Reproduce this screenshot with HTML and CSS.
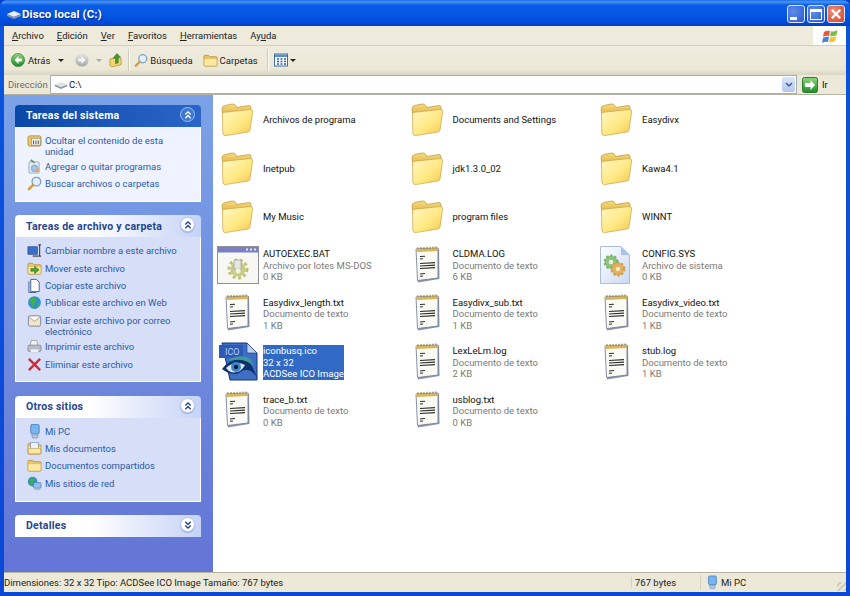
FILE: index.html
```html
<!DOCTYPE html>
<html lang="es">
<head>
<meta charset="utf-8">
<title>Disco local (C:)</title>
<link rel="stylesheet" href="styles.css">
</head>
<body>
<svg class="defs" aria-hidden="true">
  <defs>
    <linearGradient id="gFolder" x1="0" y1="0" x2="1" y2="1"><stop offset="0" stop-color="#fff8c4"/><stop offset=".55" stop-color="#ffe985"/><stop offset="1" stop-color="#f4c84e"/></linearGradient>
    <linearGradient id="gBack" x1="0" y1="0" x2="0" y2="1"><stop offset="0" stop-color="#f8dc7c"/><stop offset="1" stop-color="#dcae42"/></linearGradient>
    <linearGradient id="gGreen" x1="0" y1="0" x2="0" y2="1"><stop offset="0" stop-color="#8fd67a"/><stop offset="1" stop-color="#1f8a2a"/></linearGradient>
    <linearGradient id="gGray" x1="0" y1="0" x2="0" y2="1"><stop offset="0" stop-color="#e4e4e4"/><stop offset="1" stop-color="#a8a8a8"/></linearGradient>
    <linearGradient id="gPage" x1="0" y1="0" x2="1" y2="1"><stop offset="0" stop-color="#ffffff"/><stop offset="1" stop-color="#c9d9f3"/></linearGradient>
    <symbol id="folder" viewBox="0 0 34 34">
      <path d="M2 7Q2 4 5 3.500L12 2Q15 1.500 16 4L16.500 5.500L29 3.500Q31 3.300 31 6L31 12L3 14Z" fill="url(#gBack)" stroke="#b8953e" stroke-width=".7"/>
      <path d="M2.500 10.500L30 7.500Q33 7.300 32.600 10L30 28Q29.800 29.600 28 30L6 33.500Q3 34 2.800 31Z" fill="url(#gFolder)" stroke="#c8a24a" stroke-width=".7"/>
    </symbol>
    <symbol id="note" viewBox="0 0 26 38">
      <path d="M1.500 4L24 2.500L24.500 33L3 36.500Z" fill="#8d97ad"/>
      <path d="M1 3L23 2L23 32L2.500 34.500Z" fill="#fbfbf6" stroke="#6b7690" stroke-width=".8"/>
      <path d="M1.500 3L23 2L23 5L1.500 6Z" fill="#d9b458"/>
      <path d="M3 3V1.200M6 3V1M9 3V1M12 2.800V.8M15 2.800V.8M18 2.600V.6M21 2.500V.5" stroke="#7a6a3a" stroke-width="1"/>
      <path d="M5 10.500L10 10.200M5 13L8 12.800M5 17.500L20 16.600M5 20L20 19.100M5 22.500L20 21.600M5 28L10 27.500M5 30.300L8 30" stroke="#2e2e2e" stroke-width="1.100"/>
    </symbol>
    <symbol id="gears" viewBox="0 0 20 20">
      <circle cx="7" cy="7" r="5.500" fill="#8cc47a"/><circle cx="7" cy="7" r="5.500" fill="none" stroke="#7ab070" stroke-width="2" stroke-dasharray="2 1.500"/>
      <circle cx="7" cy="7" r="2" fill="#e8f3e0"/>
      <circle cx="13" cy="13" r="5.500" fill="#e0b060"/><circle cx="13" cy="13" r="5.500" fill="none" stroke="#cf9f4e" stroke-width="2" stroke-dasharray="2 1.500"/>
      <circle cx="13" cy="13" r="2" fill="#f5e6c4"/>
    </symbol>
    <symbol id="bat" viewBox="0 0 42 38">
      <rect x=".5" y=".5" width="41" height="37" fill="#f7f7f4" stroke="#8f8f98"/>
      <rect x="1" y="1" width="40" height="5.500" fill="#7b80c4"/>
      <path d="M29 3.500H31M33 3.500H35M37 3.500H39" stroke="#e5e6f5" stroke-width="2"/>
      <circle cx="21" cy="23" r="7.500" fill="#c9cc86"/><circle cx="21" cy="23" r="9" fill="none" stroke="#bfc274" stroke-width="3" stroke-dasharray="3 2.500"/>
      <rect x="17" y="14" width="7" height="9" rx="1" fill="#e4e6e2" stroke="#9a9c90" stroke-width=".6"/>
      <circle cx="21" cy="25" r="2.500" fill="#f5f5da"/>
    </symbol>
    <symbol id="sys" viewBox="0 0 32 40">
      <path d="M1.500 1.500H22L30.500 10V38.500H1.500Z" fill="url(#gPage)" stroke="#a9bddd"/>
      <path d="M22 1.500V10H30.500Z" fill="#a8c4ec"/>
      <use href="#gears" x="4" y="9" width="23" height="23"/>
    </symbol>
    <symbol id="ico" viewBox="0 0 40 40">
      <path d="M3 1H28L38 11V38H11Z" fill="#3f6fc4" stroke="#17346e"/>
      <path d="M28 1V11H38Z" fill="#bcd2f2" stroke="#17346e" stroke-width=".6"/>
      <rect x="0" y="3" width="24" height="13" fill="#2a5bb8"/>
      <text x="6" y="13" class="ico-tag">ICO</text>
      <path d="M3 27Q14 12 31 20L39 37Q30 22 20 31Q12 34 3 27Z" fill="#10306a"/>
      <path d="M7 26Q16 18 26 23Q22 31 14 30.500Q10 30 7 26Z" fill="#dbe8f7"/>
      <circle cx="17" cy="25" r="5" fill="#3d86c8"/><circle cx="17" cy="25" r="2.200" fill="#0a1d44"/>
      <path d="M10 17Q24 11 32 18L35 25Q26 15 12 19Z" fill="#3f9a9e"/>
    </symbol>
    <symbol id="mg" viewBox="0 0 16 16">
      <circle cx="10" cy="6" r="4.600" fill="#dff0fb" stroke="#7f9fbe" stroke-width="1.400"/>
      <path d="M6.600 9.400L2 14" stroke="#d6973f" stroke-width="2.600" stroke-linecap="round"/>
    </symbol>
    <symbol id="smallfolder" viewBox="0 0 16 16">
      <path d="M1 4Q1 2.500 2.500 2.500H6L7.500 4H14Q15 4 15 5V13Q15 14 14 14H2Q1 14 1 13Z" fill="#e9c568" stroke="#b08a35" stroke-width=".8"/>
      <path d="M1.500 6.500H14.500V13.500H1.500Z" fill="#fbe8a3"/>
    </symbol>
    <symbol id="pc" viewBox="0 0 16 16">
      <rect x="4" y=".5" width="9" height="10" rx="1.500" fill="#75b6ef" stroke="#3f72bc" stroke-width=".8"/>
      <path d="M5 11.500H12L11 15H6Z" fill="#b7c6e0" stroke="#6a86b4" stroke-width=".6"/>
    </symbol>
    <symbol id="globe" viewBox="0 0 16 16">
      <circle cx="8" cy="8" r="6.800" fill="#2f8de0"/>
      <path d="M3 5Q6 2 9 3L11 6L8 8L8 12L5 13L4 9Z" fill="#3fb04a"/>
      <path d="M11 9L14 8L13 12L10 13Z" fill="#3fb04a"/>
    </symbol>
    <symbol id="up2" viewBox="0 0 10 10">
      <path d="M2 4.500L5 1.500L8 4.500M2 8.500L5 5.500L8 8.500" fill="none" stroke="currentColor" stroke-width="1.500"/>
    </symbol>
    <symbol id="down2" viewBox="0 0 10 10">
      <path d="M2 1.500L5 4.500L8 1.500M2 5.500L5 8.500L8 5.500" fill="none" stroke="currentColor" stroke-width="1.500"/>
    </symbol>
  </defs>
</svg>

<div class="window">
  <header class="titlebar">
    <svg class="title-icon" viewBox="0 0 16 12"><path d="M1 6L8 3L15 6L8 9Z" fill="#e8ecf2"/><path d="M1 6V8L8 11L15 8V6L8 9Z" fill="#8d98a8"/></svg>
    <span class="title-text">Disco local (C:)</span>
    <div class="caption">
      <span class="cbtn cbtn-blue"><i class="min-mark"></i></span>
      <span class="cbtn cbtn-blue"><i class="max-mark"></i></span>
      <span class="cbtn cbtn-red"><svg viewBox="0 0 10 10" class="x-mark"><path d="M1.500 1.500L8.500 8.500M8.500 1.500L1.500 8.500" stroke="#fff" stroke-width="1.900"/></svg></span>
    </div>
  </header>

  <nav class="menubar">
    <span><u>A</u>rchivo</span><span><u>E</u>dición</span><span><u>V</u>er</span><span><u>F</u>avoritos</span><span><u>H</u>erramientas</span><span>Ay<u>u</u>da</span>
    <div class="flag">
      <svg viewBox="0 0 18 16"><path d="M3 4Q6 2 9 3L8 8Q5 7 2 9Z" fill="#e4593a"/><path d="M10 3.300Q13 4.300 16.500 2L15.500 7Q12 9 9 8Z" fill="#7dbb4a"/><path d="M2 10Q5 8 8 9L7 14Q4 13 1 15Z" fill="#4a80d8"/><path d="M9 9Q12 10 15.300 8L14.300 13Q11 15 8 14Z" fill="#f3c733"/></svg>
    </div>
  </nav>

  <div class="toolbar">
    <svg class="tb-round" viewBox="0 0 14 14"><circle cx="7" cy="7" r="6.600" fill="url(#gGreen)" stroke="#2c7a31" stroke-width=".6"/><path d="M7.500 3L3.500 7L7.500 11V8.500H10.800V5.500H7.500Z" fill="#fff"/></svg>
    <span class="tb-label">Atrás</span>
    <span class="tb-caret tb-caret-back"></span>
    <svg class="tb-round" viewBox="0 0 14 14"><circle cx="7" cy="7" r="6.600" fill="url(#gGray)"/><path d="M6.500 3L10.500 7L6.500 11V8.500H3.200V5.500H6.500Z" fill="#f4f4f4"/></svg>
    <span class="tb-caret tb-caret-fwd"></span>
    <svg class="tb-up" viewBox="0 0 14 16"><path d="M1 7L9 5L13 6V13L3 15.500L1 14Z" fill="#f4d470" stroke="#a8862e" stroke-width=".7"/><path d="M7 12V6H4.500L8.500 1L12.500 5H10V11Z" fill="#3f9d2f" stroke="#2c6c20" stroke-width=".5"/></svg>
    <span class="tb-sep"></span>
    <svg class="tb-search"><use href="#mg"/></svg>
    <span class="tb-label tb-tight">Búsqueda</span>
    <svg class="tb-folders"><use href="#smallfolder"/></svg>
    <span class="tb-label tb-tight">Carpetas</span>
    <span class="tb-sep tb-sep2"></span>
    <svg class="tb-views" viewBox="0 0 14 14"><rect x=".5" y="1" width="13" height="12" fill="#fff" stroke="#3a6ea5"/><rect x="1" y="1.500" width="12" height="2.500" fill="#5b8fd2"/><path d="M3 6H5M6.500 6H8.500M10 6H12M3 8.500H5M6.500 8.500H8.500M10 8.500H12M3 11H5M6.500 11H8.500M10 11H12" stroke="#2f5fa8" stroke-width="1.300"/></svg>
    <span class="tb-caret tb-caret-views"></span>
  </div>

  <div class="addressbar">
    <span class="addr-label">Dirección</span>
    <div class="addr-box">
      <svg class="drive" viewBox="0 0 16 10"><path d="M1 5L8 2L15 5L8 8Z" fill="#dfe3e8"/><path d="M1 5V7L8 10L15 7V5L8 8Z" fill="#8a93a0"/></svg>
      <span class="addr-text">C:\</span>
      <span class="addr-drop"><svg viewBox="0 0 8 6"><path d="M1 1L4 4L7 1" fill="none" stroke="#44588c" stroke-width="1.500"/></svg></span>
    </div>
    <svg class="go" viewBox="0 0 16 16"><rect x=".5" y=".5" width="15" height="15" rx="2" fill="url(#gGreen)" stroke="#2a7a30"/><path d="M8.500 3L13 8L8.500 13V10H3V6H8.500Z" fill="#fff"/></svg>
    <span class="go-text">Ir</span>
  </div>

  <div class="main">
    <aside class="sidebar">
      <section class="panel">
        <div class="panel-head head-primary"><h2>Tareas del sistema</h2><svg class="chev chev-primary"><use href="#up2" x="2.500" y="2.500" width="9" height="9"/></svg></div>
        <ul class="panel-body body-primary">
          <li><svg viewBox="0 0 16 16"><rect x="1" y="3" width="14" height="11" rx="2" fill="#e9c568" stroke="#9a7a32" stroke-width=".7"/><rect x="5" y="6" width="9" height="7" fill="#f4f4ee" stroke="#7c7c7c" stroke-width=".5"/><path d="M7 8V12M9.500 8V12M12 8V12" stroke="#444"/></svg><span>Ocultar el contenido de esta unidad</span></li>
          <li><svg viewBox="0 0 16 16"><rect x="2" y="3" width="11" height="12" rx="1" fill="#dfe8f5" stroke="#7d90b0" stroke-width=".7"/><circle cx="8" cy="10" r="3.500" fill="#9fc3e8" stroke="#6a8cb8" stroke-width=".6"/><path d="M4 1L8 4" stroke="#5a8f4a" stroke-width="1.600"/><circle cx="11" cy="12" r="2" fill="#e8a850"/></svg><span>Agregar o quitar programas</span></li>
          <li><svg><use href="#mg"/></svg><span>Buscar archivos o carpetas</span></li>
        </ul>
      </section>

      <section class="panel">
        <div class="panel-head"><h2>Tareas de archivo y carpeta</h2><svg class="chev"><use href="#up2" x="2.500" y="2.500" width="9" height="9"/></svg></div>
        <ul class="panel-body">
          <li><svg viewBox="0 0 16 16"><rect x="1" y="4" width="10" height="8" fill="#3a6fd0" stroke="#253f78" stroke-width=".7"/><path d="M12 2H15M13.500 2V14M12 14H15" stroke="#222" stroke-width="1"/><rect x="6" y="13" width="6" height="2" fill="#777"/></svg><span>Cambiar nombre a este archivo</span></li>
          <li><svg viewBox="0 0 16 16"><use href="#smallfolder"/><path d="M4 11V8H8V5.500L13 9.500L8 13.500V11Z" fill="#4da32f" stroke="#2c6c20" stroke-width=".5"/></svg><span>Mover este archivo</span></li>
          <li><svg viewBox="0 0 16 16"><path d="M4 1.500H10L13 4.500V14.500H4Z" fill="#fff" stroke="#41608c"/><path d="M2 3.500V15.500H10" fill="none" stroke="#41608c"/></svg><span>Copiar este archivo</span></li>
          <li><svg><use href="#globe"/></svg><span>Publicar este archivo en Web</span></li>
          <li><svg viewBox="0 0 16 16"><rect x="1.500" y="3" width="13" height="11" rx="1.500" fill="#f3e6c0" stroke="#7a86a8"/><path d="M2 4L8 9L14 4" fill="#fff" stroke="#7a86a8" stroke-width=".8"/></svg><span>Enviar este archivo por correo electrónico</span></li>
          <li><svg viewBox="0 0 16 16"><path d="M4.500 1.500H10.500L11.500 7H3.500Z" fill="#f4f4f4" stroke="#8a8a8a" stroke-width=".7"/><path d="M1 8Q1 6.500 3 6.500H13Q15 6.500 15 8V12Q15 13.500 13 13.500H3Q1 13.500 1 12Z" fill="#b9bcc2" stroke="#7b7f88" stroke-width=".7"/><rect x="4" y="11" width="8" height="3" fill="#eef"/></svg><span>Imprimir este archivo</span></li>
          <li><svg viewBox="0 0 16 16"><path d="M2 2L14 14M14 2L2 14" stroke="#d32a3a" stroke-width="2.600"/></svg><span>Eliminar este archivo</span></li>
        </ul>
      </section>

      <section class="panel">
        <div class="panel-head"><h2>Otros sitios</h2><svg class="chev"><use href="#up2" x="2.500" y="2.500" width="9" height="9"/></svg></div>
        <ul class="panel-body">
          <li><svg><use href="#pc"/></svg><span>Mi PC</span></li>
          <li><svg viewBox="0 0 16 16"><use href="#smallfolder"/><rect x="4" y="1.500" width="8" height="10" fill="#eaf2fb" stroke="#6a86b4" stroke-width=".6"/><path d="M1.500 8H14.500V13.500H1.500Z" fill="#fbe8a3" stroke="#b08a35" stroke-width=".5"/></svg><span>Mis documentos</span></li>
          <li><svg><use href="#smallfolder"/></svg><span>Documentos compartidos</span></li>
          <li><svg viewBox="0 0 16 16"><use href="#globe" width="12" height="12"/><rect x="7" y="7" width="8" height="6" rx="1" fill="#8fc0ec" stroke="#48709f" stroke-width=".6"/><path d="M8 13.500H14V15H8Z" fill="#aab8cc"/></svg><span>Mis sitios de red</span></li>
        </ul>
      </section>

      <section class="panel">
        <div class="panel-head"><h2>Detalles</h2><svg class="chev"><use href="#down2" x="2.500" y="2.500" width="9" height="9"/></svg></div>
      </section>
    </aside>

    <div class="files">
      <div class="item"><svg class="i-folder"><use href="#folder"/></svg><div class="meta"><b>Archivos de programa</b></div></div>
      <div class="item"><svg class="i-folder"><use href="#folder"/></svg><div class="meta"><b>Documents and Settings</b></div></div>
      <div class="item"><svg class="i-folder"><use href="#folder"/></svg><div class="meta"><b>Easydivx</b></div></div>
      <div class="item"><svg class="i-folder"><use href="#folder"/></svg><div class="meta"><b>Inetpub</b></div></div>
      <div class="item"><svg class="i-folder"><use href="#folder"/></svg><div class="meta"><b>jdk1.3.0_02</b></div></div>
      <div class="item"><svg class="i-folder"><use href="#folder"/></svg><div class="meta"><b>Kawa4.1</b></div></div>
      <div class="item"><svg class="i-folder"><use href="#folder"/></svg><div class="meta"><b>My Music</b></div></div>
      <div class="item"><svg class="i-folder"><use href="#folder"/></svg><div class="meta"><b>program files</b></div></div>
      <div class="item"><svg class="i-folder"><use href="#folder"/></svg><div class="meta"><b>WINNT</b></div></div>

      <div class="item"><svg class="i-bat"><use href="#bat"/></svg><div class="meta"><b>AUTOEXEC.BAT</b><span>Archivo por lotes MS-DOS</span><span>0 KB</span></div></div>
      <div class="item"><svg class="i-note"><use href="#note"/></svg><div class="meta"><b>CLDMA.LOG</b><span>Documento de texto</span><span>6 KB</span></div></div>
      <div class="item"><svg class="i-sys"><use href="#sys"/></svg><div class="meta"><b>CONFIG.SYS</b><span>Archivo de sistema</span><span>0 KB</span></div></div>

      <div class="item"><svg class="i-note"><use href="#note"/></svg><div class="meta"><b>Easydivx_length.txt</b><span>Documento de texto</span><span>1 KB</span></div></div>
      <div class="item"><svg class="i-note"><use href="#note"/></svg><div class="meta"><b>Easydivx_sub.txt</b><span>Documento de texto</span><span>1 KB</span></div></div>
      <div class="item"><svg class="i-note"><use href="#note"/></svg><div class="meta"><b>Easydivx_video.txt</b><span>Documento de texto</span><span>1 KB</span></div></div>

      <div class="item"><svg class="i-ico"><use href="#ico"/></svg><div class="meta selected"><b>iconbusq.ico</b><span>32 x 32</span><span>ACDSee ICO Image</span></div></div>
      <div class="item"><svg class="i-note"><use href="#note"/></svg><div class="meta"><b>LexLeLm.log</b><span>Documento de texto</span><span>2 KB</span></div></div>
      <div class="item"><svg class="i-note"><use href="#note"/></svg><div class="meta"><b>stub.log</b><span>Documento de texto</span><span>1 KB</span></div></div>

      <div class="item"><svg class="i-note"><use href="#note"/></svg><div class="meta"><b>trace_b.txt</b><span>Documento de texto</span><span>0 KB</span></div></div>
      <div class="item"><svg class="i-note"><use href="#note"/></svg><div class="meta"><b>usblog.txt</b><span>Documento de texto</span><span>0 KB</span></div></div>
    </div>
  </div>

  <footer class="statusbar">
    <span class="st-main">Dimensiones: 32 x 32 Tipo: ACDSee ICO Image Tamaño: 767 bytes</span>
    <span class="st-size">767 bytes</span>
    <span class="st-zone"><svg><use href="#pc"/></svg>Mi PC</span>
    <span class="st-grip"></span>
  </footer>
</div>
</body>
</html>
```

FILE: styles.css
```css
* { box-sizing: border-box; }
html, body { margin: 0; padding: 0; }
body { width: 850px; height: 596px; overflow: hidden; font-family: Roboto, "Liberation Sans", Arial, sans-serif; font-size: 9.500px; color: #111; background: #0a3fc8; }
.defs { display: block; width: 0; height: 0; }
ul { list-style: none; margin: 0; padding: 0; }
h2 { margin: 0; font: inherit; }

.window { width: 850px; height: 596px; display: flex; flex-direction: column; padding: 0 4px 4px 4px; background: linear-gradient(#0a55dd, #0a48d8); border-radius: 7px 7px 0 0; }

.titlebar { flex: 0 0 26px; margin: 0 -4px; padding: 2px 5px 0 6px; display: flex; align-items: center; border-radius: 7px 7px 0 0; background: linear-gradient(#1c6fe8 0, #4a93f0 2px, #0a5ce6 5px, #0457e4 14px, #0048d6 24px, #003dc0 26px); }
.title-icon { width: 16px; height: 12px; }
.title-text { font-size: 11.500px; font-weight: bold; letter-spacing: .1px; color: #fff; text-shadow: 1px 1px 1px #0a2e8c; }
.caption { margin-left: auto; display: flex; gap: 2px; }
.cbtn { width: 18px; height: 18px; border: 1px solid #dfe8fb; border-radius: 3px; display: flex; align-items: center; justify-content: center; }
.cbtn-blue { background: radial-gradient(circle at 35% 35%, #5f8eea, #2a58d0); }
.cbtn-red { background: radial-gradient(circle at 35% 35%, #ee9078, #d2452a); }
.min-mark { width: 7px; height: 3px; margin: 8px 5px 0 0; background: #fff; }
.max-mark { width: 12px; height: 11px; border: 1px solid #fff; border-top-width: 3px; }
.x-mark { width: 12px; height: 12px; }

.menubar { flex: 0 0 20px; display: flex; align-items: center; gap: 13px; padding-left: 8px; background: #eeebdc; border-bottom: 1px solid #d4d0c0; color: #222; }
.flag { margin-left: auto; width: 33px; height: 19px; background: #fff; display: flex; align-items: center; justify-content: center; }
.flag svg { width: 18px; height: 16px; }

.toolbar { flex: 0 0 29px; display: flex; align-items: center; padding: 0 0 1px 7px; background: linear-gradient(#efecdf, #ece8d6 80%, #d9d5c4); color: #222; }
.tb-round { width: 14px; height: 14px; }
.tb-label { margin-left: 3px; }
.tb-tight { margin-left: 2px; }
.tb-caret { width: 0; height: 0; border: 3px solid transparent; border-top: 3px solid #222; border-bottom: 0; }
.tb-caret-back { margin: 0 11px 0 8px; }
.tb-caret-fwd { margin: 0 7px 0 7px; border-top-color: #aaa; }
.tb-up { width: 13px; height: 16px; }
.tb-sep { width: 2px; height: 22px; margin: 0 4px 0 6px; border-left: 1px solid #cfcbb9; border-right: 1px solid #fbfaf4; }
.tb-search { width: 14px; height: 15px; }
.tb-folders { width: 15px; height: 15px; margin-left: 10px; }
.tb-sep2 { margin: 0 5px 0 9px; }
.tb-views { width: 14px; height: 14px; }
.tb-caret-views { margin-left: 2px; }

.addressbar { flex: 0 0 19px; display: flex; align-items: center; padding-left: 4px; background: #ece9d8; color: #6b6b6b; }
.addr-label { width: 42px; }
.addr-box { width: 747px; height: 19px; display: flex; align-items: center; padding: 0 1px 0 3px; background: #fff; border: 1px solid #a5aeb4; color: #111; }
.drive { width: 14px; height: 9px; }
.addr-text { margin-left: 1px; }
.addr-drop { margin-left: auto; width: 13px; height: 15px; display: flex; align-items: center; justify-content: center; background: linear-gradient(#dbe6fb, #b4c8ee); border-radius: 2px; }
.addr-drop svg { width: 8px; height: 6px; }
.go { width: 16px; height: 16px; margin-left: 5px; }
.go-text { margin-left: 4px; color: #111; }

.main { flex: 1; min-height: 0; display: flex; background: #fff; border-top: 1px solid #b5b2a2; }

.sidebar { flex: 0 0 208.500px; padding: 9.500px 12px 0 11px; display: flex; flex-direction: column; gap: 13.200px; background: linear-gradient(#7ba2e7, #6375d6); }
.panel-head { height: 22px; display: flex; align-items: center; justify-content: space-between; padding: 0 6px 0 11px; border-radius: 4px 4px 0 0; font-size: 10.500px; font-weight: bold; background: linear-gradient(90deg, #fff, #fff 40%, #c6d3f7); }
.panel-head h2 { color: #1f4590; letter-spacing: .25px; }
.head-primary { background: linear-gradient(90deg, #0a48a8, #2a66c8); }
.head-primary h2 { color: #fff; }
.chev { width: 15px; height: 15px; margin-top: -3px; border-radius: 50%; background: #fff; border: 1px solid #b6c5ea; color: #1f3f86; box-shadow: 0 1px 1px #9db0dc; }
.chev-primary { background: #3f78d0; color: #fff; border-color: #9dbcf0; box-shadow: none; }
.panel-body { padding: 7px 10px 9.800px 11px; display: flex; flex-direction: column; gap: 3.400px; background: #d6dff7; border: 1px solid #fff; border-top: 0; color: #2b5aa8; }
.body-primary { background: #eff3ff; }
.panel-body li { display: flex; gap: 3px; line-height: 11px; min-height: 14px; align-items: flex-start; }
.panel-body li svg { flex: 0 0 15px; width: 15px; height: 15px; margin-top: -1px; }
.panel-body li span { padding-top: 1px; }

.files { flex: 1; padding: 0 0 0 4.500px; display: grid; grid-template-columns: repeat(3, 189.500px); grid-auto-rows: 48.500px; align-content: start; }
.item { display: flex; align-items: center; color: #111; }
.item > svg { flex: none; }
.i-folder { width: 34px; height: 34px; margin-left: 3px; margin-right: 9px; }
.i-note { width: 26px; height: 38px; margin-left: 8px; margin-right: 12px; }
.i-bat { width: 42px; height: 38px; margin-left: 0; margin-right: 4px; }
.i-sys { width: 32px; height: 40px; margin-left: 3px; margin-right: 11px; }
.i-ico { width: 40px; height: 40px; margin-left: 2px; margin-right: 4px; }
.meta { display: flex; flex-direction: column; line-height: 11.500px; margin-top: 1px; }
.meta b { font-weight: normal; color: #111; }
.meta span { color: #7a7a7a; }
.selected { background: #316ac5; }
.selected b, .selected span { color: #fff; }
.ico-tag { font-family: Roboto, Arial, sans-serif; font-size: 9px; fill: #b8cdf2; }

.statusbar { flex: 0 0 20px; display: flex; align-items: center; background: #ece9d8; border-top: 1px solid #b5b2a2; color: #222; }
.st-main { flex: 0 0 627px; }
.st-size { flex: 0 0 69px; padding-left: 3px; border-left: 1px solid #d4d0c0; }
.st-zone { flex: 0 0 120px; display: flex; align-items: center; gap: 2px; padding-left: 4px; border-left: 1px solid #d4d0c0; }
.st-zone svg { width: 14px; height: 15px; }
.st-grip { width: 9px; height: 9px; margin: auto 0 1px auto; background: repeating-linear-gradient(135deg, #ece9d8 0 2px, #d0cdbc 2px 4px); }
```
